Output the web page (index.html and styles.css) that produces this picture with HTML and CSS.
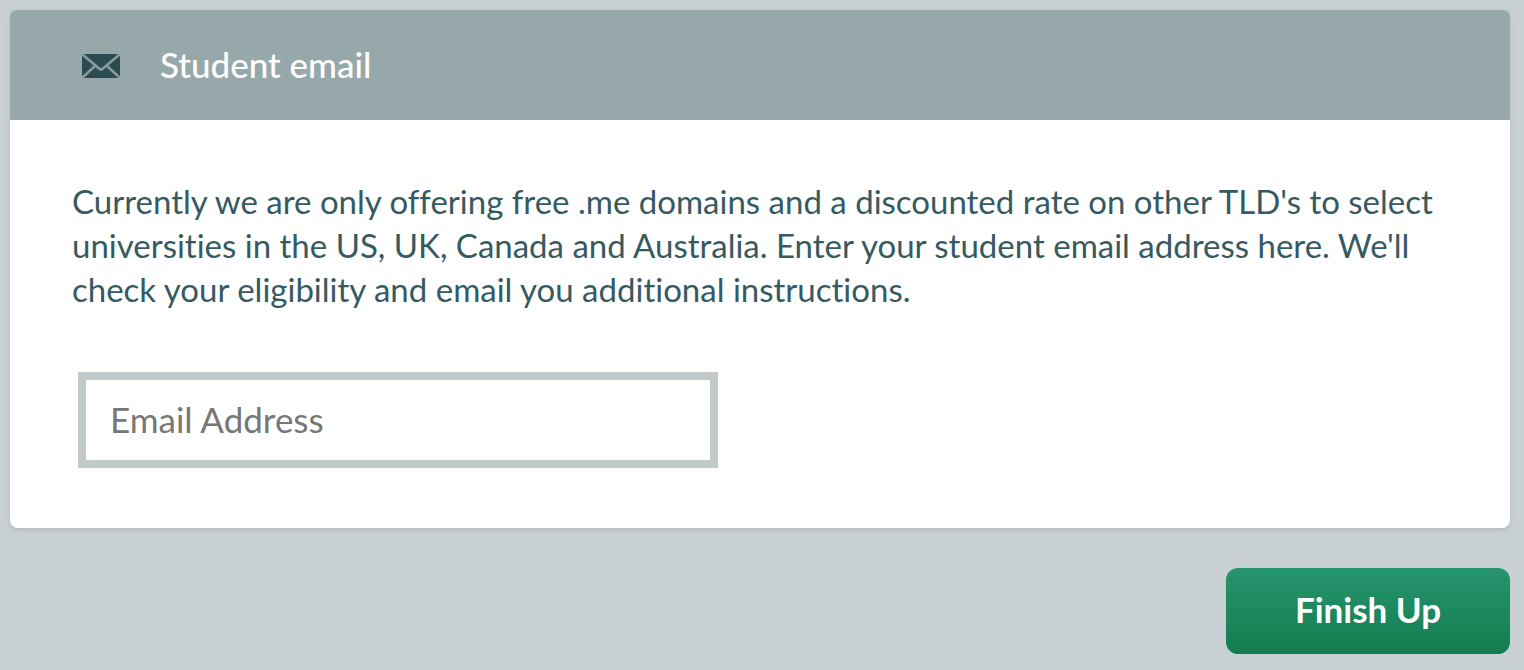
FILE: index.html
```html
<!DOCTYPE html>
<html lang="en">
<head>
<meta charset="utf-8">
<meta name="viewport" content="width=device-width, initial-scale=1">
<title>Student email</title>
<link rel="stylesheet" href="styles.css">
</head>
<body>
<form class="signup">
  <section class="card">
    <header class="card-header">
      <svg class="mail-icon" viewBox="0 0 38 24" aria-hidden="true">
        <rect width="38" height="24" fill="#2c4b51"/>
        <path d="M0 0L17 14.500Q19 16.500 21 14.500L38 0M0 24L13.500 11.500M38 24L24.500 11.500" fill="none" stroke="#869b9e" stroke-width="2.600"/>
      </svg>
      <h1 class="card-title">Student email</h1>
    </header>
    <div class="card-body">
      <p class="intro">Currently we are only offering free .me domains and a discounted rate on other TLD's to select universities in the US, UK, Canada and Australia. Enter your student email address here. We'll check your eligibility and email you additional instructions.</p>
      <input class="email-input" type="email" aria-label="Email Address" placeholder="Email Address">
    </div>
  </section>
  <button class="submit" type="submit">Finish Up</button>
</form>
</body>
</html>
```
FILE: styles.css
```css
* { box-sizing: border-box; }
body {
  margin: 0;
  background: #c8d0d3;
  color: #365a61;
  font-family: Lato, sans-serif;
  font-variant-ligatures: none;
}
.signup {
  display: flex;
  flex-direction: column;
  gap: 40px;
  padding: 10px 14px 16px 10px;
}
.card {
  background: #fff;
  border-radius: 6px 6px 8px 8px;
  overflow: hidden;
  box-shadow: 0 2px 4px rgba(60, 90, 97, 0.16);
}
.card-header {
  display: flex;
  align-items: center;
  gap: 40px;
  padding: 35px 72px 33px;
  background: #97a8ab;
}
.mail-icon {
  flex: none;
  width: 38px;
  height: 24px;
}
.card-title {
  margin: 0;
  padding-bottom: 4px;
  color: #fff;
  font-size: 35px;
  font-weight: 500;
  line-height: 38px;
}
.card-body { padding: 59px 58px 60px 62px; }
.intro {
  margin: 0 0 61px;
  font-size: 33px;
  line-height: 44px;
}
.email-input {
  display: block;
  width: 640px;
  max-width: 100%;
  height: 96px;
  margin-left: 6px;
  padding: 0 24px 2px;
  border: 8px solid #c1c9cb;
  border-radius: 0;
  background: #fff;
  color: #365a61;
  font: 35px Lato, sans-serif;
}
.email-input::placeholder { color: #777; opacity: 1; }
.submit {
  align-self: flex-end;
  min-width: 284px;
  padding: 19px 32px 23px;
  border: 0;
  border-radius: 12px;
  background: linear-gradient(#26946e, #147d50);
  color: #fff;
  font: bold 35px/44px Lato, sans-serif;
}
```
